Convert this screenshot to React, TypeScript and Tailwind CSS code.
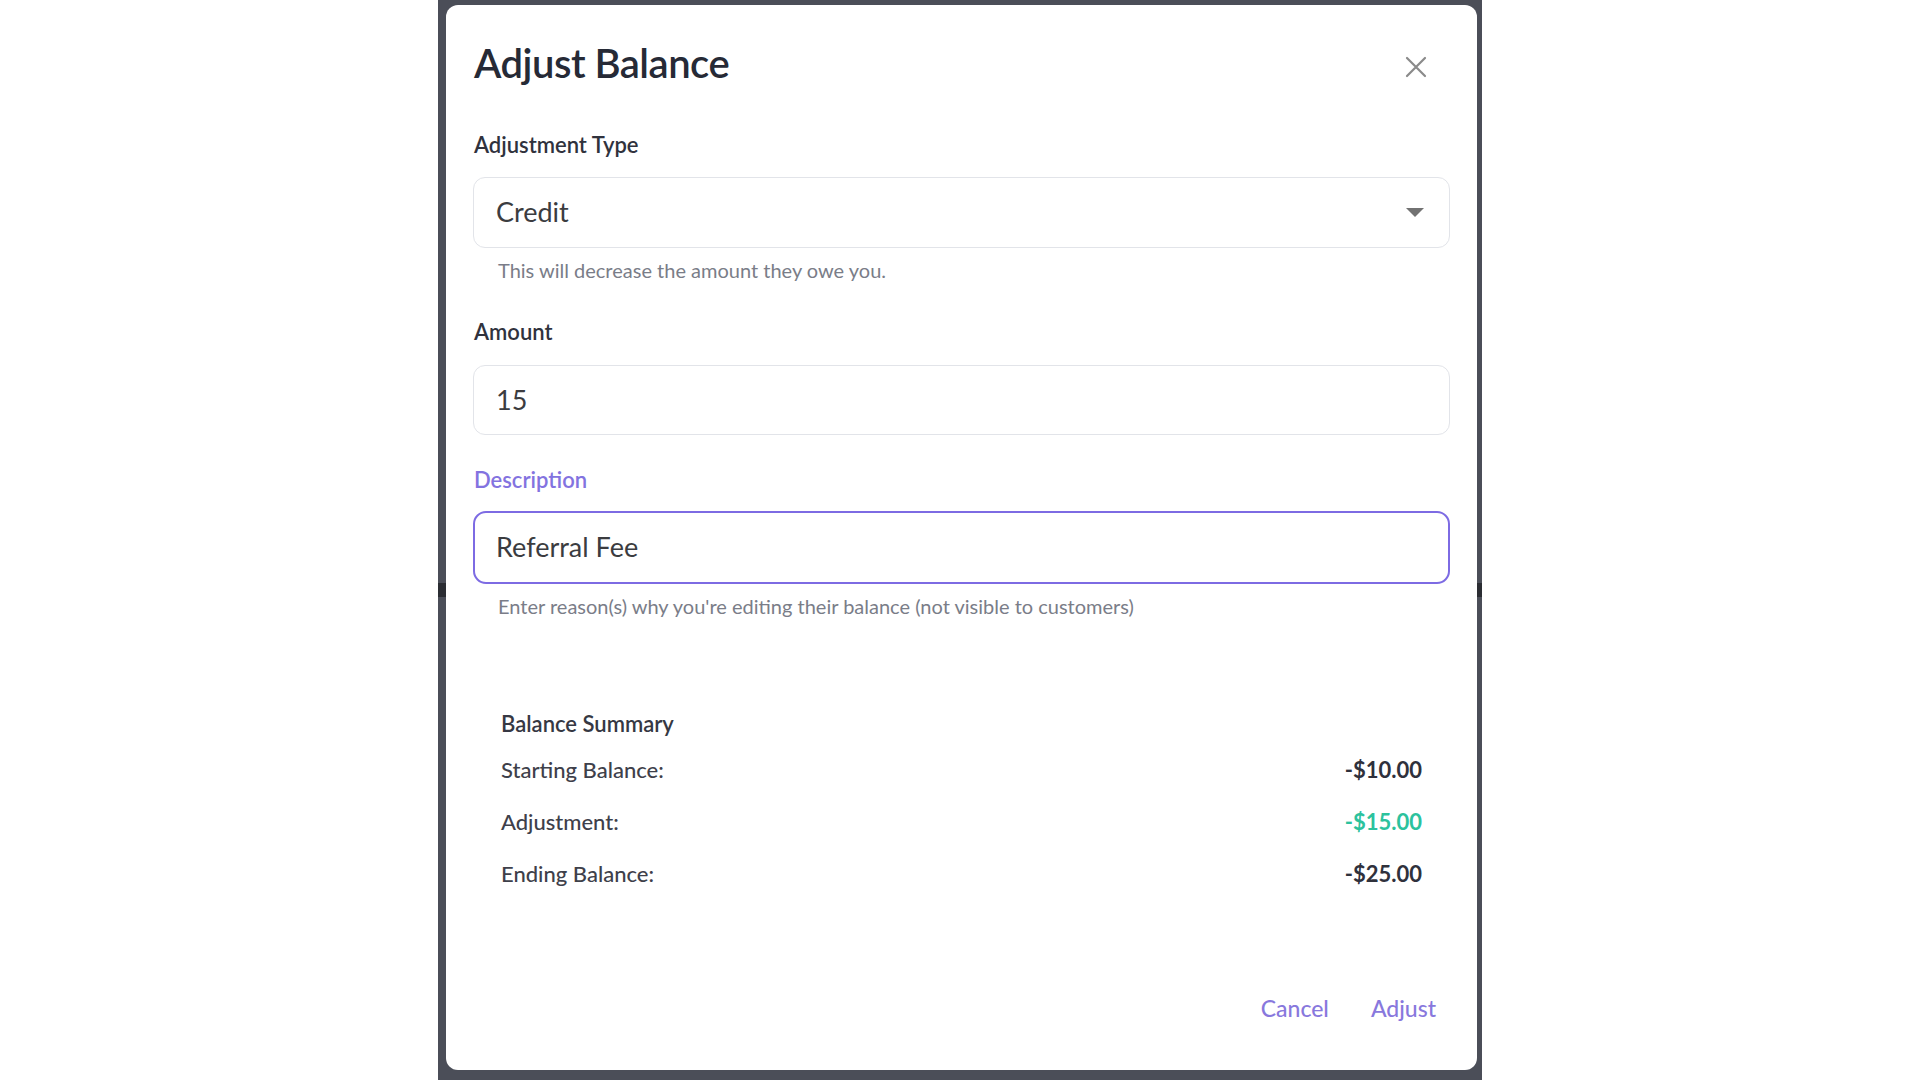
import React from 'react'

const font = { fontFamily: 'Lato, "Noto Sans", sans-serif' }

function CloseIcon() {
  return (
    <svg width="22" height="22" viewBox="0 0 22 22" fill="none" stroke="#8a8a8a" strokeWidth="2.2" strokeLinecap="round">
      <path d="M2 2 L20 20 M20 2 L2 20" />
    </svg>
  )
}

function Caret() {
  return (
    <svg width="18" height="9" viewBox="0 0 18 9">
      <path d="M0 0 H18 L9 9 Z" fill="#727272" />
    </svg>
  )
}

const rows = [
  { label: 'Starting Balance:', value: '-$10.00', color: 'text-[#2f313c]' },
  { label: 'Adjustment:', value: '-$15.00', color: 'text-[#2cc29d]' },
  { label: 'Ending Balance:', value: '-$25.00', color: 'text-[#2f313c]' },
]

export default function App() {
  return (
    <div className="min-h-screen w-full bg-white flex justify-center" style={font}>
      <div className="relative w-[1044px] h-[1080px] bg-[#4b4e58] pl-[8px] pr-[5px] pt-[5px] pb-[10px]">
        <div className="absolute left-0 top-[583px] w-[8px] h-[14px] bg-[#2b2d33]" />
        <div className="absolute right-0 top-[583px] w-[5px] h-[14px] bg-[#2b2d33]" />

        <div className="h-full bg-white rounded-[12px] px-[27px] pt-[34px] flex flex-col">
          {/* header */}
          <div className="flex items-start justify-between">
            <h2 className="text-[40px] leading-[48px] font-semibold tracking-[-0.5px] text-[#262a36] pl-[1px]">Adjust Balance</h2>
            <button className="mt-[17px] mr-[23px]" aria-label="Close">
              <CloseIcon />
            </button>
          </div>

          {/* adjustment type */}
          <label className="mt-[46px] text-[22px] leading-[24px] font-semibold text-[#30323d] pl-[1px]">Adjustment Type</label>
          <div className="mt-[20px] h-[71px] rounded-[12px] border border-[#e2e4e9] flex items-center justify-between pl-[22px] pr-[25px]">
            <span className="text-[27px] text-[#3b3c40]">Credit</span>
            <Caret />
          </div>
          <p className="mt-[11px] pl-[25px] text-[20px] leading-[22px] text-[#7a7d88]">This will decrease the amount they owe you.</p>

          {/* amount */}
          <label className="mt-[39px] text-[22px] leading-[24px] font-semibold text-[#30323d] pl-[1px]">Amount</label>
          <div className="mt-[21px] h-[70px] rounded-[12px] border border-[#e2e4e9] flex items-center pl-[22px]">
            <span className="text-[27px] text-[#3b3c40]">15</span>
          </div>

          {/* description */}
          <label className="mt-[33px] text-[22px] leading-[24px] font-semibold text-[#8373e0] pl-[1px]">Description</label>
          <div className="mt-[19px] h-[73px] rounded-[13px] border-2 border-[#7d6be3] flex items-center pl-[21px]">
            <span className="text-[27px] text-[#3b3c40]">Referral Fee</span>
          </div>
          <p className="mt-[11px] pl-[25px] text-[20px] leading-[22px] text-[#7a7d88]">
            Enter reason(s) why you're editing their balance (not visible to customers)
          </p>

          {/* summary */}
          <div className="mt-[94px] px-[28px]">
            <h3 className="text-[22px] leading-[26px] font-semibold text-[#363843]">Balance Summary</h3>
            <div className="mt-[20px] flex flex-col gap-[26px]">
              {rows.map((r) => (
                <div key={r.label} className="flex justify-between text-[22px] leading-[26px]">
                  <span className="font-medium text-[#3e404a]">{r.label}</span>
                  <span className={`font-bold ${r.color}`}>{r.value}</span>
                </div>
              ))}
            </div>
          </div>

          {/* actions */}
          <div className="mt-[108px] flex justify-end gap-[42px] pr-[14px]">
            <button className="text-[23px] leading-[26px] font-medium text-[#8878dd]">Cancel</button>
            <button className="text-[23px] leading-[26px] font-medium text-[#8878dd]">Adjust</button>
          </div>
        </div>
      </div>
    </div>
  )
}
